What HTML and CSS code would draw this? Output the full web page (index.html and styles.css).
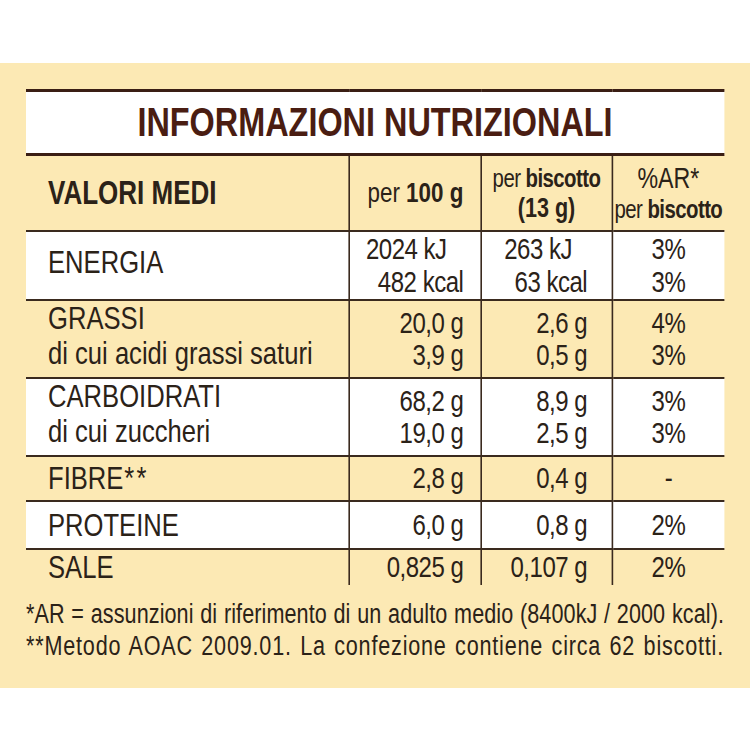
FILE: index.html
```html
<!DOCTYPE html>
<html lang="it">
<head>
<meta charset="utf-8">
<title>Informazioni nutrizionali</title>
<link rel="stylesheet" href="styles.css">
</head>
<body>
<div class="panel">
  <div class="sheet">
    <table class="nt">
      <colgroup>
        <col class="c1"><col class="c2"><col class="c3"><col class="c4">
      </colgroup>
      <thead>
        <tr class="title"><th colspan="4">INFORMAZIONI NUTRIZIONALI</th></tr>
        <tr class="head">
          <th class="lbl">VALORI MEDI</th>
          <th class="num">per <b>100 g</b></th>
          <th class="ctr"><span class="pb">per <b>biscotto</b></span><br><b class="g13">(13 g)</b></th>
          <th class="ctr"><span class="ar">%AR*</span><br><span class="pb">per <b>biscotto</b></span></th>
        </tr>
      </thead>
      <tbody>
        <tr class="r-energia white">
          <td class="lbl up">ENERGIA</td>
          <td class="num"><span class="kj2">2024 kJ</span><br>482 kcal</td>
          <td class="num v3"><span class="kj3">263 kJ</span><br>63 kcal</td>
          <td class="ctr">3%<br>3%</td>
        </tr>
        <tr class="r-grassi">
          <td class="lbl up">GRASSI<br>di cui acidi grassi saturi</td>
          <td class="num">20,0 g<br>3,9 g</td>
          <td class="num v3">2,6 g<br>0,5 g</td>
          <td class="ctr">4%<br>3%</td>
        </tr>
        <tr class="r-carbo white">
          <td class="lbl up">CARBOIDRATI<br>di cui zuccheri</td>
          <td class="num">68,2 g<br>19,0 g</td>
          <td class="num v3">8,9 g<br>2,5 g</td>
          <td class="ctr">3%<br>3%</td>
        </tr>
        <tr class="r-fibre">
          <td class="lbl">FIBRE<span class="stars">**</span></td>
          <td class="num">2,8 g</td>
          <td class="num v3">0,4 g</td>
          <td class="ctr">-</td>
        </tr>
        <tr class="r-prot white">
          <td class="lbl">PROTEINE</td>
          <td class="num">6,0 g</td>
          <td class="num v3">0,8 g</td>
          <td class="ctr">2%</td>
        </tr>
        <tr class="r-sale last">
          <td class="lbl">SALE</td>
          <td class="num">0,825 g</td>
          <td class="num v3">0,107 g</td>
          <td class="ctr">2%</td>
        </tr>
      </tbody>
    </table>
    <div class="notes">
      <p class="n1">*AR = assunzioni di riferimento di un adulto medio (8400kJ / 2000 kcal).</p>
      <p class="n2">**Metodo AOAC 2009.01. La confezione contiene circa 62 biscotti.</p>
    </div>
  </div>
</div>
</body>
</html>
```
FILE: styles.css
```css
html, body {
  margin: 0;
  padding: 0;
  background: #ffffff;
}
body {
  font-family: "Liberation Sans", Arial, sans-serif;
  color: #2b2218;
}
.panel {
  margin-top: 63px;
  height: 625px;
  background: #fce9b4;
  padding-top: 26px;
  box-sizing: border-box;
  overflow: hidden;
}
/* the label uses a condensed grotesque: emulate it by narrowing the whole sheet */
.sheet {
  width: 872.5px;
  margin-left: 26px;
  transform: scaleX(0.8);
  transform-origin: 0 0;
}
.nt {
  width: 872.5px;
  border-collapse: collapse;
  table-layout: fixed;
  font-size: 30px;
  line-height: 32.5px;
  letter-spacing: -0.6px;
}
.c1 { width: 403.75px; }
.c2 { width: 165px; }
.c3 { width: 163.75px; }
.c4 { width: 140px; }

.nt th, .nt td {
  padding: 0;
  vertical-align: middle;
  font-weight: normal;
  white-space: nowrap;
  border-left: 2.5px solid #3a2a1e;
  border-bottom: 2px solid #3a2a1e;
}
.nt th:first-child, .nt td:first-child { border-left: none; }
.nt tr.last td { border-bottom: none; }
.nt b { font-weight: bold; }

.title th {
  background: #ffffff;
  color: #4a1d12;
  font-weight: bold;
  font-size: 40.5px;
  letter-spacing: 0;
  height: 61px;
  border-top: 3px solid #3a1e14;
  border-bottom: 3px solid #3a1e14;
  text-align: center;
}
.head th {
  height: 74px;
  font-size: 28px;
  line-height: 30px;
  letter-spacing: 0;
}
.head th.lbl {
  font-weight: bold;
  font-size: 32.5px;
}
.pb { font-size: 25.5px; letter-spacing: -0.7px; }
.g13 { font-size: 27px; }
.ar { font-size: 29px; }

.lbl { text-align: left; padding-left: 27.5px !important; }
td.lbl { font-size: 32px; line-height: 35px; letter-spacing: 0; }
td.lbl.up { padding-bottom: 6px !important; }
.num { text-align: right; padding-right: 21px !important; }
.num.v3 { padding-right: 30px !important; }
.kj2 { margin-right: 21px; }
.kj3 { margin-right: 19px; }
.ctr { text-align: center; }
.stars { letter-spacing: 3px; margin-left: 1px; }
.white td { background: #ffffff; }

.r-energia td { height: 67px; }
.r-grassi td { height: 74px; }
.r-carbo td { height: 73px; }
.r-energia td.lbl { height: 61px; }
.r-grassi td.lbl { height: 68px; }
.r-carbo td.lbl { height: 67px; }
.r-fibre td { height: 43px; }
.r-prot td { height: 46px; }
.r-sale td { height: 34px; }

.notes {
  margin-top: 13px;
  font-size: 27px;
  line-height: 32px;
}
.notes p {
  margin: 0;
  white-space: nowrap;
  text-align: justify;
  text-align-last: justify;
}
.n1 { letter-spacing: 0.1px; }
.n2 { letter-spacing: 1px; }
```
